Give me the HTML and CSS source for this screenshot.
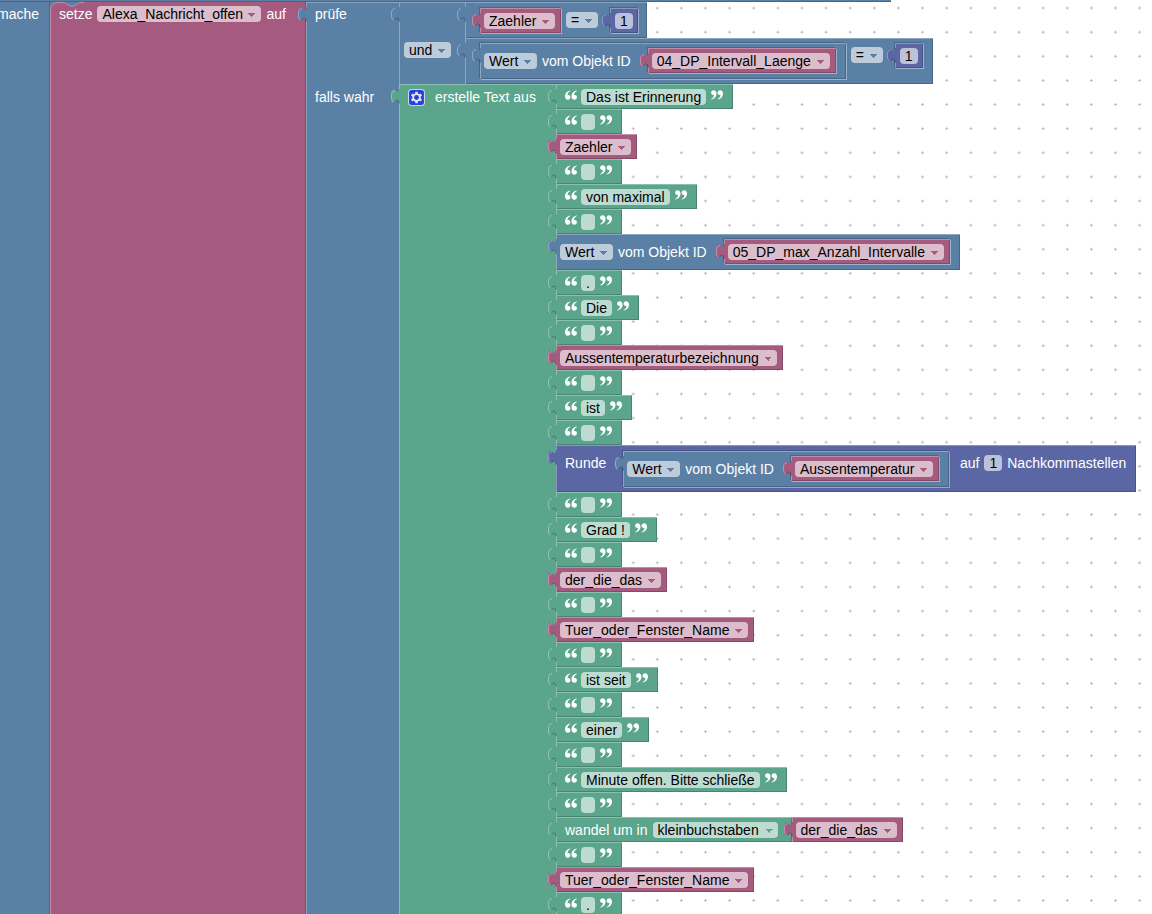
FILE: index.html
```
<!DOCTYPE html>
<html lang="de">
<head>
<meta charset="utf-8">
<title>Blockly</title>
<link rel="stylesheet" href="styles.css">
</head>
<body>
<svg class="defs" aria-hidden="true">
  <symbol id="tab" viewBox="0 0 9 16"><path d="M9 0H8C8 9.600 0 -7.700 0 7.200S8 4.800 8 14.400H9Z" fill="currentColor"/><path d="M4 1.800C1.800 1.800 .5 3 .5 7.200C.5 11 1.200 12.500 2.500 13" fill="none" stroke="#fff" stroke-opacity=".35"/><path d="M3.500 12.800C5 10.800 7.500 9.500 8 14.400" fill="none" stroke="#000" stroke-opacity=".25"/></symbol>
  <symbol id="open" viewBox="0 0 12 10"><path d="M5.300 .4C2.200 .9 0 3.200 0 6.200C0 8.400 1.100 9.700 2.900 9.700C4.400 9.700 5.400 8.700 5.400 7.300C5.400 6 4.500 5.100 3.200 5.100C2.900 5.100 2.700 5.100 2.500 5.200C2.600 3.300 3.500 1.900 5.400 1ZM11.800 .4C8.700 .9 6.500 3.200 6.500 6.200C6.500 8.400 7.600 9.700 9.400 9.700C10.900 9.700 11.900 8.700 11.900 7.300C11.900 6 11 5.100 9.700 5.100C9.400 5.100 9.200 5.100 9 5.200C9.100 3.300 10 1.900 11.900 1Z" fill="#fff"/></symbol>
  <symbol id="close" viewBox="0 0 12 10"><use href="#open" width="12" height="10" transform="rotate(180 6 5)"/></symbol>
</svg>
<main class="workspace">
  <svg class="grid" aria-hidden="true">
    <defs><pattern id="dots" x="-6" y="-4" width="24.120" height="24.120" patternUnits="userSpaceOnUse"><path d="M10.500 12H13.500M12 10.500V13.500" stroke="#bbb"/></pattern></defs>
    <rect width="100%" height="100%" fill="url(#dots)"/>
  </svg>
  <div class="program">
    <div class="rim blue"></div>
    <div class="stack">
      <div class="mache blue">mache</div>
      <section class="setter pink">
        <svg class="notch" viewBox="0 0 34 8" aria-hidden="true"><path d="M0 0V8A8 8 0 0 1 8 0H14L20 4H24L30 0H34V0Z" fill="#5b80a5"/><path d="M0 8A8 8 0 0 1 8 .5H14L20 4H24L30 .5H34" fill="none" stroke="#c08ca6"/></svg>
        <span class="label">setze</span>
        <select aria-label="Variable"><option>Alexa_Nachricht_offen</option></select>
        <span class="label">auf</span>
      </section>
      <section class="ternary">
        <div class="line">
          <div class="side first blue"><svg class="tab"><use href="#tab"/></svg><span class="label">prüfe</span></div>
          <div class="logic blue">
            <svg class="tab"><use href="#tab"/></svg>
            <select aria-label="Verknüpfung"><option>und</option></select>
          </div>
          <div class="operands">
            <div class="block blue compare">
              <svg class="tab"><use href="#tab"/></svg>
              <div class="block pink inner"><svg class="tab"><use href="#tab"/></svg><select aria-label="Variable"><option>Zaehler</option></select></div>
              <select aria-label="Vergleich"><option>=</option></select>
              <div class="block violet inner num"><svg class="tab"><use href="#tab"/></svg><input aria-label="Zahl" value="1"></div>
            </div>
            <div class="block blue compare">
              <svg class="tab"><use href="#tab"/></svg>
              <div class="block blue wert inner">
                <svg class="tab"><use href="#tab"/></svg>
                <select aria-label="Attribut"><option>Wert</option></select><span class="label">vom Objekt ID</span>
                <div class="block pink inner"><svg class="tab"><use href="#tab"/></svg><select aria-label="Objekt"><option>04_DP_Intervall_Laenge</option></select></div>
              </div>
              <select aria-label="Vergleich"><option>=</option></select>
              <div class="block violet inner num"><svg class="tab"><use href="#tab"/></svg><input aria-label="Zahl" value="1"></div>
            </div>
          </div>
        </div>
        <div class="line grow">
          <div class="side blue"><span class="label">falls wahr</span></div>
          <div class="join green">
            <svg class="tab"><use href="#tab"/></svg>
            <button class="gear" aria-label="Einstellungen"><svg viewBox="0 0 16 16"><rect x=".5" y=".5" width="15" height="15" rx="3" fill="#2440d8" stroke="#c6dbe4"/><path d="M8 2.700V13.300M3.400 5.350L12.600 10.650M12.600 5.350L3.400 10.650" stroke="#dfe6fa" stroke-width="2.400"/><circle cx="8" cy="8" r="3.900" fill="#dfe6fa"/><circle cx="8" cy="8" r="2.300" fill="#2440d8"/></svg></button>
            <span class="label">erstelle Text aus</span>
          </div>
          <div class="items">
            <div class="block green text"><svg class="tab"><use href="#tab"/></svg><svg class="quote"><use href="#open"/></svg><input aria-label="Text" value="Das ist Erinnerung"><svg class="quote"><use href="#close"/></svg></div>
            <div class="block green text"><svg class="tab"><use href="#tab"/></svg><svg class="quote"><use href="#open"/></svg><input aria-label="Text" value=" "><svg class="quote"><use href="#close"/></svg></div>
            <div class="block pink"><svg class="tab"><use href="#tab"/></svg><select aria-label="Variable"><option>Zaehler</option></select></div>
            <div class="block green text"><svg class="tab"><use href="#tab"/></svg><svg class="quote"><use href="#open"/></svg><input aria-label="Text" value=" "><svg class="quote"><use href="#close"/></svg></div>
            <div class="block green text"><svg class="tab"><use href="#tab"/></svg><svg class="quote"><use href="#open"/></svg><input aria-label="Text" value="von maximal"><svg class="quote"><use href="#close"/></svg></div>
            <div class="block green text"><svg class="tab"><use href="#tab"/></svg><svg class="quote"><use href="#open"/></svg><input aria-label="Text" value=" "><svg class="quote"><use href="#close"/></svg></div>
            <div class="block blue wert">
              <svg class="tab"><use href="#tab"/></svg>
              <select aria-label="Attribut"><option>Wert</option></select><span class="label">vom Objekt ID</span>
              <div class="block pink inner"><svg class="tab"><use href="#tab"/></svg><select aria-label="Objekt"><option>05_DP_max_Anzahl_Intervalle</option></select></div>
            </div>
            <div class="block green text"><svg class="tab"><use href="#tab"/></svg><svg class="quote"><use href="#open"/></svg><input aria-label="Text" value="."><svg class="quote"><use href="#close"/></svg></div>
            <div class="block green text"><svg class="tab"><use href="#tab"/></svg><svg class="quote"><use href="#open"/></svg><input aria-label="Text" value="Die"><svg class="quote"><use href="#close"/></svg></div>
            <div class="block green text"><svg class="tab"><use href="#tab"/></svg><svg class="quote"><use href="#open"/></svg><input aria-label="Text" value=" "><svg class="quote"><use href="#close"/></svg></div>
            <div class="block pink"><svg class="tab"><use href="#tab"/></svg><select aria-label="Variable"><option>Aussentemperaturbezeichnung</option></select></div>
            <div class="block green text"><svg class="tab"><use href="#tab"/></svg><svg class="quote"><use href="#open"/></svg><input aria-label="Text" value=" "><svg class="quote"><use href="#close"/></svg></div>
            <div class="block green text"><svg class="tab"><use href="#tab"/></svg><svg class="quote"><use href="#open"/></svg><input aria-label="Text" value="ist"><svg class="quote"><use href="#close"/></svg></div>
            <div class="block green text"><svg class="tab"><use href="#tab"/></svg><svg class="quote"><use href="#open"/></svg><input aria-label="Text" value=" "><svg class="quote"><use href="#close"/></svg></div>
            <div class="block violet round">
              <svg class="tab"><use href="#tab"/></svg>
              <span class="label">Runde</span>
              <div class="block blue wert inner">
                <svg class="tab"><use href="#tab"/></svg>
                <select aria-label="Attribut"><option>Wert</option></select><span class="label">vom Objekt ID</span>
                <div class="block pink inner"><svg class="tab"><use href="#tab"/></svg><select aria-label="Objekt"><option>Aussentemperatur</option></select></div>
              </div>
              <span class="label">auf</span><input aria-label="Nachkommastellen" value="1"><span class="label">Nachkommastellen</span>
            </div>
            <div class="block green text"><svg class="tab"><use href="#tab"/></svg><svg class="quote"><use href="#open"/></svg><input aria-label="Text" value=" "><svg class="quote"><use href="#close"/></svg></div>
            <div class="block green text"><svg class="tab"><use href="#tab"/></svg><svg class="quote"><use href="#open"/></svg><input aria-label="Text" value="Grad !"><svg class="quote"><use href="#close"/></svg></div>
            <div class="block green text"><svg class="tab"><use href="#tab"/></svg><svg class="quote"><use href="#open"/></svg><input aria-label="Text" value=" "><svg class="quote"><use href="#close"/></svg></div>
            <div class="block pink"><svg class="tab"><use href="#tab"/></svg><select aria-label="Variable"><option>der_die_das</option></select></div>
            <div class="block green text"><svg class="tab"><use href="#tab"/></svg><svg class="quote"><use href="#open"/></svg><input aria-label="Text" value=" "><svg class="quote"><use href="#close"/></svg></div>
            <div class="block pink"><svg class="tab"><use href="#tab"/></svg><select aria-label="Variable"><option>Tuer_oder_Fenster_Name</option></select></div>
            <div class="block green text"><svg class="tab"><use href="#tab"/></svg><svg class="quote"><use href="#open"/></svg><input aria-label="Text" value=" "><svg class="quote"><use href="#close"/></svg></div>
            <div class="block green text"><svg class="tab"><use href="#tab"/></svg><svg class="quote"><use href="#open"/></svg><input aria-label="Text" value="ist seit"><svg class="quote"><use href="#close"/></svg></div>
            <div class="block green text"><svg class="tab"><use href="#tab"/></svg><svg class="quote"><use href="#open"/></svg><input aria-label="Text" value=" "><svg class="quote"><use href="#close"/></svg></div>
            <div class="block green text"><svg class="tab"><use href="#tab"/></svg><svg class="quote"><use href="#open"/></svg><input aria-label="Text" value="einer"><svg class="quote"><use href="#close"/></svg></div>
            <div class="block green text"><svg class="tab"><use href="#tab"/></svg><svg class="quote"><use href="#open"/></svg><input aria-label="Text" value=" "><svg class="quote"><use href="#close"/></svg></div>
            <div class="block green text"><svg class="tab"><use href="#tab"/></svg><svg class="quote"><use href="#open"/></svg><input aria-label="Text" value="Minute offen. Bitte schließe"><svg class="quote"><use href="#close"/></svg></div>
            <div class="block green text"><svg class="tab"><use href="#tab"/></svg><svg class="quote"><use href="#open"/></svg><input aria-label="Text" value=" "><svg class="quote"><use href="#close"/></svg></div>
            <div class="pair">
              <div class="block green convert"><svg class="tab"><use href="#tab"/></svg><span class="label">wandel um in</span><select aria-label="Schreibweise"><option>kleinbuchstaben</option></select></div>
              <div class="block pink"><svg class="tab"><use href="#tab"/></svg><select aria-label="Variable"><option>der_die_das</option></select></div>
            </div>
            <div class="block green text"><svg class="tab"><use href="#tab"/></svg><svg class="quote"><use href="#open"/></svg><input aria-label="Text" value=" "><svg class="quote"><use href="#close"/></svg></div>
            <div class="block pink"><svg class="tab"><use href="#tab"/></svg><select aria-label="Variable"><option>Tuer_oder_Fenster_Name</option></select></div>
            <div class="block green text"><svg class="tab"><use href="#tab"/></svg><svg class="quote"><use href="#open"/></svg><input aria-label="Text" value="."><svg class="quote"><use href="#close"/></svg></div>
          </div>
        </div>
      </section>
    </div>
  </div>
</main>
</body>
</html>
```
FILE: styles.css
```
* { box-sizing: border-box; }
body { margin: 0; background: #fff; font: 14px/16px "Liberation Sans", Arial, sans-serif; color: #fff; }
.defs { position: absolute; width: 0; height: 0; }
.workspace { position: relative; height: 100vh; overflow: hidden; }
.grid { position: absolute; inset: 0; width: 100%; height: 100%; }
.program { position: relative; display: flex; flex-direction: column; min-height: 100%; width: max-content; }

.blue { --fill: #5b80a5; --field: #bdccdb; --light: #8ca6c0; --dark: #496684; }
.pink { --fill: #a55b80; --field: #dbbdcc; --light: #c08ca6; --dark: #844966; }
.green { --fill: #5ba58c; --field: #bddbd1; --light: #8cc0ae; --dark: #498470; }
.violet { --fill: #5b67a5; --field: #bdc2db; --light: #8c95c0; --dark: #495284; }
.blue, .pink, .green, .violet { background: var(--fill); }

.rim { width: 891px; height: 2px; border-bottom: 1px solid var(--dark); }
.stack { display: flex; flex: 1; }
.mache { width: 50px; padding-top: 4px; display: flex; justify-content: flex-end; padding-right: 10px; border-right: 1px solid var(--dark); }
.setter { position: relative; width: 256px; padding: 4px 8px; display: flex; align-items: flex-start; gap: 5px; border-right: 1px solid var(--dark); border-left: 1px solid var(--light); }
.notch { position: absolute; left: -1px; top: 0; width: 34px; height: 8px; }
.ternary { display: flex; flex-direction: column; }
.line { display: flex; }
.grow { flex: 1; }
.side { position: relative; width: 93px; padding: 5px 8px; border-left: 1px solid var(--light); }
.first { border-top: 1px solid var(--light); padding-top: 3px; }
.logic { position: relative; width: 66px; padding: 39px 4px 0; border-left: 1px solid var(--light); border-top: 1px solid var(--light); }
.logic .tab, .first .tab { left: -9px; top: 4px; }
.operands { display: flex; flex-direction: column; align-items: flex-start; }
.join { position: relative; width: 157px; padding: 4px 8px; display: flex; align-items: flex-start; gap: 9px; border-top: 1px solid var(--light); border-left: 1px solid var(--light); }
.join .label { margin-left: 1px; }
.join .tab { left: -9px; top: 4px; }
.items { display: flex; flex-direction: column; align-items: flex-start; }

.block { position: relative; display: flex; align-items: flex-start; height: 25px; padding: 5px 6px 4px 4px; box-shadow: inset 1px 1px var(--light), inset -1px -1px var(--dark); }
.tab { position: absolute; left: -8px; top: 5px; width: 9px; height: 16px; color: var(--fill); }
.inner { box-shadow: inset 1px 1px var(--light), inset -1px -1px var(--dark), -1px -1px rgba(0, 0, 0, .2), 1px 1px rgba(255, 255, 255, .4); }
.text { padding: 5px 10px 4px 9px; gap: 4px; }
.text input + .quote { margin-left: 1px; }
.quote { width: 12px; height: 10px; margin-top: 1px; flex: none; }
.wert { height: 36px; padding: 5px 10px 5px 4px; }
.wert > select, .wert > .label { margin-top: 5px; }
.wert > .label { margin-left: 5px; }
.wert > .inner { margin-left: 17px; }
.compare { height: 36px; padding: 6px 9px 5px 15px; gap: 5px; }
.compare + .compare { height: 46px; padding-top: 5px; padding-right: 10px; }
.compare > select { margin-top: 4px; }
.compare > .num { margin-left: 7px; }
.num.block { padding-left: 5px; padding-right: 5px; }
.round { height: 47px; padding: 6px 10px 5px 9px; gap: 5px; }
.round > .label, .round > input { margin-top: 4px; }
.round > .wert { margin-left: 12px; margin-right: 6px; }
.pair { display: flex; }
.convert { padding: 5px 14px 4px 9px; gap: 5px; }

.label { white-space: nowrap; }
input, select { appearance: none; font: inherit; color: #000; margin: 0; height: 16px; border: 0; border-radius: 4px; padding: 0 5px; background-color: var(--field); }
input { field-sizing: content; min-width: 14px; }
select { padding-right: 18px; background-image: linear-gradient(to bottom right, var(--fill) 50%, transparent 50%), linear-gradient(to bottom left, var(--fill) 50%, transparent 50%); background-size: 4px 4px; background-position: right 5px top 7px, right 9px top 7px; background-repeat: no-repeat; }
.gear { width: 17px; height: 17px; padding: 0; border: 0; background: none; }
.gear svg { display: block; width: 17px; height: 17px; }
```
